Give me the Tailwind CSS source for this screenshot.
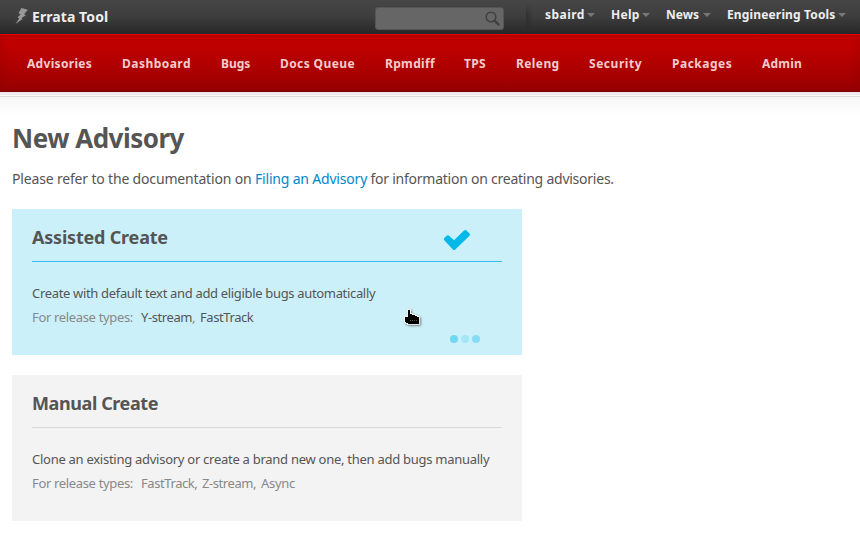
<!DOCTYPE html>
<html lang="en">
<head>
<meta charset="utf-8">
<title>New Advisory - Errata Tool</title>
<script src="https://cdn.jsdelivr.net/npm/@tailwindcss/browser@4"></script>
</head>
<body class="relative h-[535px] w-[860px] overflow-hidden bg-white font-['Noto_Sans','Open_Sans',sans-serif] text-[#555]">
<header>
  <div class="flex h-[34px] bg-linear-to-b from-[#464646] via-[#3d3d3d] to-[#272727] font-bold text-[#eee]">
    <div class="flex w-[375px] pl-[15px]">
      <svg class="mt-2 h-4 w-[13px]" viewBox="0 0 13 16" fill="#999"><path d="M6.500 0 12.800 1.800 9 6.200 11 7.200 6.500 10 7.500 11 .5 16 4.200 10.400 2.600 9.200 5.600 6.400 3.600 5Z"/></svg>
      <span class="ml-1 mt-[7px] text-sm leading-5 tracking-[0.08px]">Errata Tool</span>
    </div>
    <div class="mt-[7px] flex h-[23px] w-[129px] justify-end rounded-[3px] border border-[#555] bg-[#666]">
      <svg class="mr-[3px] mt-[3px] size-[15px]" viewBox="0 0 15 15" fill="none" stroke="#404040"><circle cx="6" cy="6" r="4.800" stroke-width="1.600"/><path d="m9.800 9.800 3.600 3.600" stroke-width="2.500" stroke-linecap="round"/></svg>
    </div>
    <div class="ml-[22px] mt-1 h-6 w-[7px] bg-linear-to-r from-black/25 to-transparent mask-y-from-50%"></div>
    <nav class="ml-3 flex pt-[5px] text-xs leading-[20px]">
      <div class="flex w-[66px]"><span class="w-[42px] tracking-[0.45px]">sbaird</span><svg class="mt-2 h-[4px] w-[8px]" viewBox="0 0 8 4"><path d="M0 0h8L4 4z" fill="#777"/></svg></div>
      <div class="flex w-[55px]"><span class="w-[31px] tracking-[0.3px]">Help</span><svg class="mt-2 h-[4px] w-[8px]" viewBox="0 0 8 4"><path d="M0 0h8L4 4z" fill="#777"/></svg></div>
      <div class="flex w-[61px]"><span class="w-[37px]">News</span><svg class="mt-2 h-[4px] w-[8px]" viewBox="0 0 8 4"><path d="M0 0h8L4 4z" fill="#777"/></svg></div>
      <div class="flex"><span class="w-[111px] whitespace-nowrap tracking-[0.15px]">Engineering Tools</span><svg class="mt-2 h-[4px] w-[8px]" viewBox="0 0 8 4"><path d="M0 0h8L4 4z" fill="#777"/></svg></div>
    </nav>
  </div>
  <nav class="flex h-[58px] gap-[30px] whitespace-nowrap border-b border-t border-t-[#e20000] border-b-[#7d0000] bg-linear-to-b from-[#c90000] to-[#9a0000] pl-[27px] pt-[19px] text-xs font-bold leading-5 text-[#f3cccc] shadow-[inset_0_0_12px_rgba(90,0,0,0.22)]">
    <span class="w-[65px] tracking-[0.31px]">Advisories</span>
    <span class="w-[69px] tracking-[0.47px]">Dashboard</span>
    <span class="w-[29px]">Bugs</span>
    <span class="w-[75px] tracking-[0.4px]">Docs Queue</span>
    <span class="w-[49px] tracking-[0.33px]">Rpmdiff</span>
    <span class="w-[22px] tracking-[0.3px]">TPS</span>
    <span class="w-[43px] tracking-[0.4px]">Releng</span>
    <span class="w-[53px] tracking-[0.53px]">Security</span>
    <span class="w-[60px] tracking-[0.5px]">Packages</span>
    <span class="w-[40px] tracking-[0.2px]">Admin</span>
  </nav>
  <div class="h-[5px] border-b border-[#dcdcdc] bg-linear-to-b from-[#eeeaec] from-75% to-[#fafafa] to-75%"></div>
  <div class="h-[18px] bg-linear-to-b from-[#f6f6f6] to-white"></div>
</header>
<main class="px-3 pt-[5px]">
  <h1 class="text-[26px] font-bold leading-9 tracking-[-0.5px]">New Advisory</h1>
  <p class="mt-[13px] flex whitespace-pre text-sm leading-5"><span class="w-[243px] tracking-[-0.17px]">Please refer to the documentation on </span><a class="w-[112px] tracking-[-0.19px] text-[#0088cc]">Filing an Advisory</a><span class="tracking-[-0.24px]"> for information on creating advisories.</span></p>
  <section class="mt-5 h-[146px] w-[510px] bg-[#ccf0f9] px-5">
    <div class="flex h-[53px] border-b border-[#2fbce6] pt-[16px]">
      <h2 class="w-[411px] text-lg font-bold leading-6 tracking-[-0.2px]">Assisted Create</h2>
      <svg class="mt-[4px] h-[21px] w-[28px]" viewBox="0 0 28 21"><path d="M1.500 8.800 3.700 6.700q1.200-1 2.400 0L11 11.300 21 1.600q1.300-1.100 2.500 0L26.500 4.500q1 1.100 0 2.200L12.300 20.400q-1.200 1-2.400 0L1.500 11.600q-1.200-1.400 0-2.800Z" fill="#00b9e8"/></svg>
    </div>
    <p class="mt-[21px] whitespace-nowrap text-[13px] leading-5 tracking-[-0.33px]">Create with default text and add eligible bugs automatically</p>
    <p class="mt-1 flex whitespace-nowrap text-[13px] leading-5 tracking-[-0.42px] text-[#888]"><span class="w-[109px] tracking-[-0.34px]">For release types:</span><span class="w-[59px]"><span class="text-[#555]">Y-stream</span>,</span><span class="text-[#555]">FastTrack</span></p>
    <div class="ml-[418px] mt-[8px] flex gap-[3px]">
      <i class="size-2 rounded-full bg-[#70d8f1]"></i><i class="size-2 rounded-full bg-[#a3e7f6]"></i><i class="size-2 rounded-full bg-[#86ddf3]"></i>
    </div>
  </section>
  <section class="mt-5 h-[146px] w-[510px] bg-[#f3f3f3] px-5">
    <div class="h-[53px] border-b border-[#dadada] pt-[16px]">
      <h2 class="text-lg font-bold leading-6 tracking-[-0.4px]">Manual Create</h2>
    </div>
    <p class="mt-[21px] whitespace-nowrap text-[13px] leading-5 tracking-[-0.27px]">Clone an existing advisory or create a brand new one, then add bugs manually</p>
    <p class="mt-1 flex whitespace-nowrap text-[13px] leading-5 tracking-[-0.42px] text-[#888]"><span class="w-[109px] tracking-[-0.34px]">For release types:</span><span class="w-[61px]">FastTrack,</span><span class="w-[59px]">Z-stream,</span><span class="tracking-[-0.28px]">Async</span></p>
  </section>
</main>
<svg class="absolute left-[402px] top-[308px] h-[19px] w-[19px] drop-shadow-[1px_1px_1px_rgba(0,0,0,0.5)]" viewBox="0 0 19 19"><path d="M6 2h2v4h2v1h3v1h2v1h2v7H6v-1H4v-1H3V9h3Z" fill="#000" stroke="#fff" stroke-width="1.600" paint-order="stroke"/><path d="M8 12.500h7" stroke="#555" stroke-dasharray="1 1"/></svg>
</body>
</html>
